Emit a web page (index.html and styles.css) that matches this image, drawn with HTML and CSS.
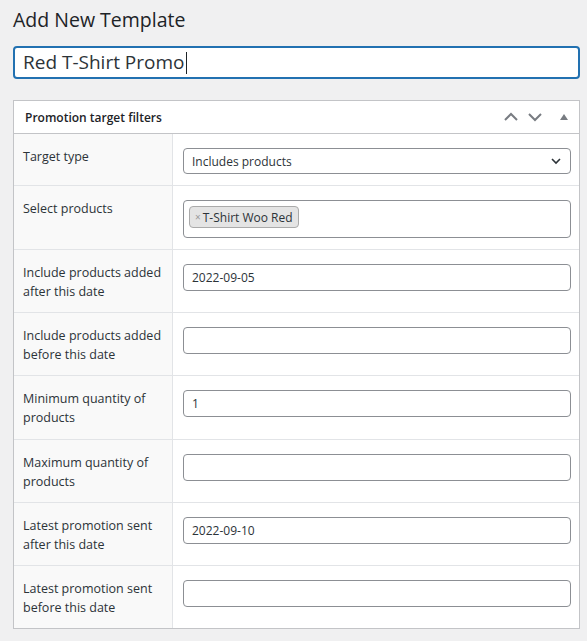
FILE: index.html
```html
<!DOCTYPE html>
<html>
<head>
<meta charset="utf-8">
<link rel="stylesheet" href="styles.css">
</head>
<body>
<div class="wrap">
  <h1 class="page-title">Add New Template</h1>
  <div class="title-field"><span class="title-text">Red T-Shirt Promo</span><span class="caret"></span></div>

  <div class="postbox">
    <div class="postbox-header">
      <h2 class="postbox-title">Promotion target filters</h2>
      <div class="handle-actions">
        <svg class="hicon" viewBox="0 0 16 10" width="16" height="10"><polyline points="2,8 8,2 14,8" fill="none" stroke="#787c82" stroke-width="2"/></svg>
        <svg class="hicon" viewBox="0 0 16 10" width="16" height="10"><polyline points="2,2 8,8 14,2" fill="none" stroke="#787c82" stroke-width="2"/></svg>
        <svg class="hicon tri" viewBox="0 0 10 8" width="10" height="8"><polygon points="5,1 9,7 1,7" fill="#787c82"/></svg>
      </div>
    </div>
    <div class="rows">
      <div class="row">
        <div class="label">Target type</div>
        <div class="value">
          <div class="select"><span>Includes products</span>
            <svg class="chev" viewBox="0 0 12 8" width="12" height="8"><polyline points="2,2 6,6 10,2" fill="none" stroke="#2c3338" stroke-width="1.6"/></svg>
          </div>
        </div>
      </div>
      <div class="row">
        <div class="label">Select products</div>
        <div class="value">
          <div class="multi"><span class="tag"><span class="tag-x">×</span>T-Shirt Woo Red</span></div>
        </div>
      </div>
      <div class="row">
        <div class="label">Include products added after this date</div>
        <div class="value"><div class="input">2022-09-05</div></div>
      </div>
      <div class="row">
        <div class="label">Include products added before this date</div>
        <div class="value"><div class="input"></div></div>
      </div>
      <div class="row">
        <div class="label">Minimum quantity of products</div>
        <div class="value"><div class="input">1</div></div>
      </div>
      <div class="row">
        <div class="label">Maximum quantity of products</div>
        <div class="value"><div class="input"></div></div>
      </div>
      <div class="row">
        <div class="label">Latest promotion sent after this date</div>
        <div class="value"><div class="input">2022-09-10</div></div>
      </div>
      <div class="row">
        <div class="label">Latest promotion sent before this date</div>
        <div class="value"><div class="input"></div></div>
      </div>
    </div>
  </div>
</div>
</body>
</html>
```

FILE: styles.css
```css
html, body {
  margin: 0;
  padding: 0;
  background: #f0f0f1;
}
body {
  font-family: "Open Sans", "Noto Sans", sans-serif;
  color: #1d2327;
  font-size: 13px;
}
.wrap {
  padding: 0 7px 0 13px;
}
.page-title {
  margin: 0;
  padding: 5px 0 0;
  font-size: 19.5px;
  font-weight: 400;
  line-height: 29px;
  color: #1d2327;
}
.title-field {
  margin-top: 12px;
  height: 29px;
  border: 2px solid #2271b1;
  border-radius: 4px;
  background: #fff;
  display: flex;
  align-items: center;
  padding-left: 8px;
  box-sizing: content-box;
}
.title-text {
  font-size: 19px;
  color: #2c3338;
  line-height: 29px;
}
.caret {
  display: inline-block;
  width: 1px;
  height: 22px;
  background: #1d2327;
  margin-left: 1px;
}
.postbox {
  margin-top: 21px;
  background: #fff;
  border: 1px solid #c3c4c7;
}
.postbox-header {
  display: flex;
  align-items: center;
  justify-content: space-between;
  height: 32px;
  border-bottom: 1px solid #c3c4c7;
}
.postbox-title {
  margin: 0;
  padding-left: 11px;
  font-size: 12px;
  font-weight: 600;
  color: #1d2327;
}
.handle-actions {
  display: flex;
  align-items: center;
  gap: 8px;
  padding-right: 10px;
}
.hicon.tri {
  margin-left: 8px;
}
.row {
  display: grid;
  grid-template-columns: 159px 1fr;
  border-bottom: 1px solid #e2e4e7;
}
.row:last-child {
  border-bottom: none;
}
.label {
  background: #f9f9f9;
  border-right: 1px solid #e2e4e7;
  padding: 13px 10px 11px 9px;
  font-size: 12.5px;
  line-height: 19.1px;
  color: #2c3338;
}
.value {
  padding: 14px 8px 11px 10px;
}
.select, .input, .multi {
  border: 1px solid #8c8f94;
  border-radius: 4px;
  background: #fff;
  box-sizing: border-box;
  font-size: 12px;
  color: #2c3338;
}
.select {
  height: 26px;
  display: flex;
  align-items: center;
  justify-content: space-between;
  padding: 0 8px 0 8px;
}
.input {
  height: 27px;
  display: flex;
  align-items: center;
  padding: 0 8px;
}
.multi {
  height: 38px;
  padding: 5px 5px;
}
.tag {
  display: inline-flex;
  align-items: center;
  height: 22px;
  box-sizing: border-box;
  padding: 0 5px 0 5px;
  background: #e4e4e4;
  border: 1px solid #aaa;
  border-radius: 4px;
  font-size: 12px;
  color: #2c3338;
}
.tag-x {
  color: #999;
  font-size: 10px;
  margin-right: 2px;
}
```
